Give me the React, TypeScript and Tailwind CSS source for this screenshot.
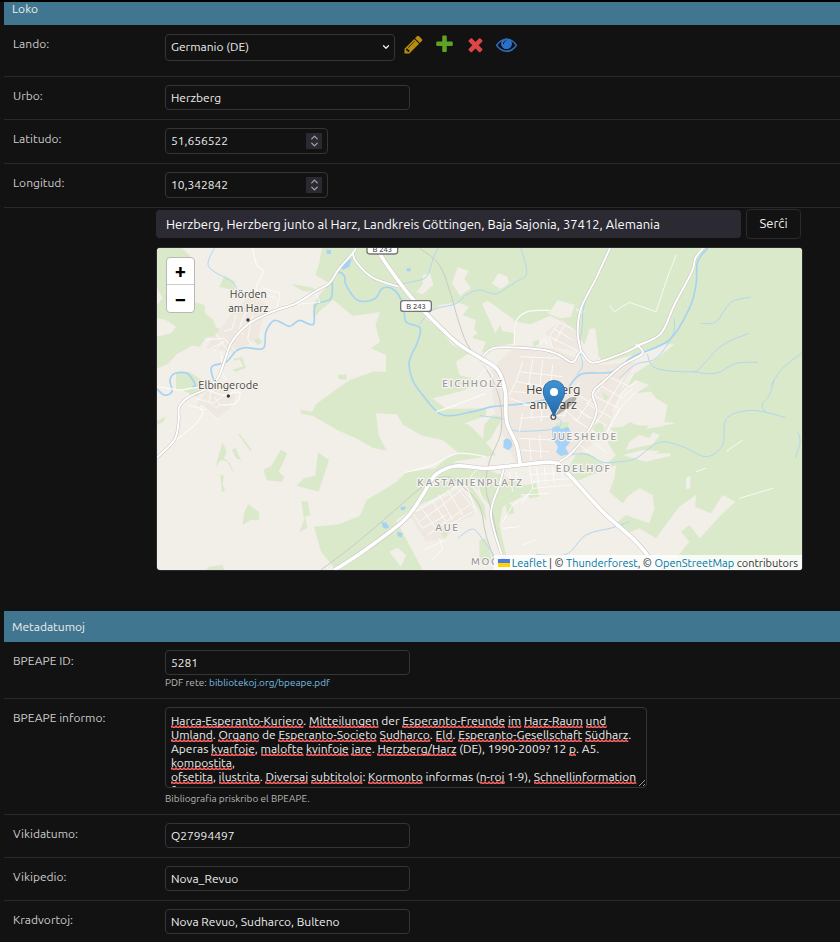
import { useMemo, useState } from 'react';
import type { ReactNode } from 'react';
import { ChevronDown, ChevronUp } from 'lucide-react';

type Point = [number, number];

const FIELD =
  'h-[25px] w-full rounded border border-[#353535] bg-[#121212] px-[5px] text-xs text-[#eeeeee] outline-none focus:border-[#666666]';

/* ---------- map data, in map units ---------- */

const FORESTS = [
  '3,129 78,129 100,150 112,200 100,240 110,290 145,300 148,325 172,345 180,368 210,376 195,392 150,398 132,425 108,422 62,448 34,478 3,490 3,395 45,385 60,365 30,345 3,340 3,300 20,280 3,250',
  '205,212 238,230 236,256 190,246',
  '405,236 470,248 490,262 440,258',
  '60,505 100,500 145,530 150,552 120,575 90,560 60,552',
  '232,462 258,455 270,488 240,500 228,494 262,484 250,462 236,468',
  '288,400 302,392 320,412 305,420',
  '545,510 572,508 572,525 548,522',
  '498,129 1938,129 1938,1095 540,1095 495,1040 474,965 548,958 612,932 632,885 720,832 752,800 838,790 870,760 905,742 860,705 800,692 742,660 722,628 660,625 668,690 692,738 650,728 600,700 545,676 470,632 436,626 432,614 468,620 480,598 545,550 582,525 650,500 690,500 690,450 645,430 672,410 658,360 672,322 590,332 532,285 500,310 478,334 470,300 492,268 522,236 478,210 490,175',
  '3,648 30,634 22,652 3,660',
  '200,712 212,740 204,760 222,775 235,808 214,770 196,765 180,784 188,750',
  '246,686 252,688 288,736 282,738',
  '228,734 240,728 246,746 256,766 240,760',
  '192,808 204,812 200,836 207,856 198,862',
  '374,734 394,745 368,800 384,815 378,830 332,826 322,794 346,782',
  '486,742 519,766 488,860 422,842 444,820 478,812',
  '276,898 308,920 310,946 284,944 260,960 264,925',
  '436,888 456,890 462,930 446,936 455,966 430,984 444,944',
  '160,1085 200,1080 205,1095 150,1095',
];

const FIELDS = [
  '800,210 822,205 832,240 800,268 780,262 800,240',
  '905,186 938,198 925,222 945,250 912,272 888,235',
  '850,300 905,292 940,305 920,330 960,345 950,400 990,410 972,455 930,440 890,420 850,375 805,335',
  '916,380 950,368 965,385 935,402',
  '560,90 575,90 575,100 560,100',
  '1008,236 1026,205 1052,214 1060,235 1034,252',
  '978,296 996,288 1075,345 1078,385 1040,378 1032,360 1018,385',
  '1182,318 1205,286 1256,300 1244,336 1212,340 1175,325',
  '1258,310 1290,318 1270,330',
  '900,470 930,450 990,440 1010,425 1075,415 1080,350 1124,358 1182,332 1220,350 1262,380 1290,430 1278,445 1300,372 1318,370 1328,455 1345,472 1440,448 1515,418 1555,418 1490,470 1430,510 1395,560 1440,525 1480,540 1440,565 1485,560 1500,580 1535,600 1525,650 1560,655 1470,672 1490,650 1440,640 1400,665 1360,668 1385,690 1355,712 1380,752 1345,780 1300,745 1265,740 1230,800 1320,860 1340,900 1350,1095 1060,1095 1010,980 1000,900 960,850 910,830 880,860 790,900 720,945 800,1095 1200,1095 1130,850 1010,800 890,770 1020,750 980,700 940,660 925,655 990,632 990,610 870,612 830,580 910,560 985,530 910,510',
  '1400,750 1460,735 1510,738 1498,746 1540,745 1545,752 1470,770',
  '1430,600 1510,595 1530,620 1520,665 1440,660 1400,640',
  '1420,710 1450,690 1480,700 1490,682 1512,690 1490,718 1410,735',
  '1040,905 1108,870 1210,850 1380,780 1375,820 1360,860 1400,895 1420,870 1450,850 1490,870 1495,910 1480,955 1435,940 1410,930 1380,955 1415,985 1450,970 1500,1000 1570,905 1620,870 1618,905 1665,925 1700,870 1738,890 1690,935 1632,1000 1600,960 1575,980 1600,1010 1560,1060 1545,1060 1500,1095 1060,1095 1030,960',
  '1590,820 1604,812 1602,850 1590,852',
  '700,1040 725,1028 750,1050 735,1085',
];

const BUILT_UP = [
  '1080,420 1190,430 1260,460 1340,480 1440,470 1400,540 1350,690 1260,750 1170,770 1080,780 1020,640 1000,500',
  '1220,345 1268,385 1280,440 1190,425 1170,380',
  '880,870 910,845 955,900 955,930 905,950 870,1000 810,1010 760,930',
  '225,330 290,260 330,300 305,400 240,440 150,430 170,400',
  '120,600 160,550 240,560 230,600 185,640 140,610',
];

const PARKS = [
  '985,660 1010,630 1040,635 1005,700 980,720',
  '1310,660 1340,650 1345,690 1320,700',
  '1200,655 1240,650 1235,670 1200,672',
  '1110,840 1140,835 1150,875 1120,880',
  '1340,560 1360,575 1345,590',
  '840,955 850,950 876,985 865,1000',
  '925,830 950,850 985,900 992,950 960,900',
  '1050,895 1070,900 1075,925 1052,930',
  '970,1005 990,1000 1010,1070 970,1070',
  '1130,410 1148,404 1150,418 1132,425',
];

const LAKES = [
  '1188,668 1206,662 1216,672 1236,665 1250,690 1240,715 1228,728 1238,745 1216,754 1200,742 1206,725 1190,700',
  '1043,706 1052,700 1065,705 1070,722 1058,736 1042,728',
  '676,952 690,952 700,966 690,972 680,966',
  '734,905 750,905 746,915 734,915',
  '512,134 526,136 524,148 512,146',
  '552,180 588,160 580,185 560,195',
  '724,980 740,984 738,998 724,992',
  '752,190 765,190 762,200 752,198',
];

const RIVERS: Point[][] = [
  [[3, 552], [25, 570], [48, 560], [42, 525], [58, 505], [95, 506], [118, 540], [108, 545]],
  [[180, 545], [166, 500], [172, 482], [212, 470], [240, 438], [270, 428], [322, 430], [330, 380], [356, 346], [400, 364], [430, 346], [472, 358], [478, 300], [525, 280], [530, 220], [550, 202], [566, 215], [570, 240], [605, 286], [655, 282], [680, 250], [715, 255], [742, 300], [750, 350], [792, 368], [785, 410], [760, 470], [770, 525], [800, 570], [860, 630], [950, 620], [1010, 605], [1110, 595], [1180, 580], [1230, 555], [1275, 508], [1370, 500], [1430, 455], [1540, 405], [1600, 310], [1620, 240], [1625, 170], [1655, 129]],
  [[175, 129], [158, 185], [230, 232], [245, 265]],
  [[845, 129], [830, 165], [812, 215], [770, 230], [718, 240]],
  [[790, 358], [830, 315], [900, 296], [930, 270], [972, 255], [1020, 266], [1080, 230], [1112, 205], [1095, 129]],
  [[1360, 129], [1320, 220], [1285, 300], [1278, 370], [1270, 430], [1280, 480], [1262, 510]],
  [[972, 632], [1050, 645], [1070, 675], [1130, 678], [1200, 670], [1215, 650], [1190, 630]],
  [[1210, 750], [1290, 748], [1340, 772], [1390, 770], [1440, 760], [1510, 712], [1580, 725], [1650, 755], [1700, 720], [1712, 640], [1790, 616], [1890, 638]],
  [[1855, 525], [1840, 570], [1818, 600], [1832, 625]],
  [[1634, 355], [1680, 350], [1725, 292], [1785, 276]],
  [[1474, 448], [1500, 490], [1610, 500], [1640, 480], [1700, 420], [1778, 385]],
  [[1610, 500], [1680, 505], [1740, 475], [1805, 472]],
  [[1938, 444], [1880, 490], [1845, 540]],
  [[1925, 680], [1932, 710], [1918, 760]],
  [[1140, 1048], [1230, 1048], [1290, 990], [1370, 968], [1420, 950]],
  [[906, 1000], [950, 972], [985, 1010], [1020, 1060]],
  [[1390, 520], [1440, 478], [1500, 460], [1550, 390], [1555, 340]],
];

const RAILWAYS: Point[][] = [
  [[790, 129], [850, 180], [885, 270], [905, 340], [935, 420], [990, 490], [1030, 580], [1035, 680], [1000, 770], [990, 850], [1010, 930], [1045, 1095]],
  [[495, 1095], [600, 1015], [700, 930], [800, 845], [870, 815], [920, 845], [970, 900], [990, 990], [1025, 1095]],
];

const LANES: Point[][] = [
  [[290, 129], [302, 180], [322, 200], [300, 250], [320, 280]],
  [[3, 545], [70, 555], [130, 548], [200, 570], [250, 562], [238, 595], [190, 600]],
  [[60, 705], [110, 665], [138, 630], [135, 600]],
  [[748, 802], [830, 780], [905, 745], [990, 755]],
  [[1075, 420], [1080, 350], [1115, 320], [1180, 316]],
  [[840, 620], [900, 600], [990, 565]],
];

const STREETS = [
  'M318 248L372 264 362 312M318 265L362 280M290 330L275 400 285 418M270 320L250 370 262 390M240 330L228 372 205 378M148 405L205 400 240 440M170 440L205 410 165 430M180 385L220 445M478 262L492 292 390 300M195 440L200 505 212 525',
  'M120 580L170 595 200 575 240 555M138 600L165 625 190 648M165 595L180 610 192 600 175 575M95 600L150 615M170 530L160 590',
  'M1090 455L1210 460M1100 470L1080 530 1060 570M1130 462L1115 560M1160 465L1150 560M1190 480L1180 570M1090 500L1220 515M1080 530L1200 550M1070 560L1230 570M1100 600L1180 600M1090 640L1230 630M1100 625L1090 680M1130 600L1125 640M1160 590L1155 650M1060 580L1150 610',
  'M1210 352L1255 375M1192 370L1250 405M1180 395L1270 440M1210 352L1180 395 1190 430M1225 362L1195 412M1150 420L1165 400 1175 418M975 470L1010 510 1000 540M1000 480L965 520',
  'M1350 510L1420 545 1440 530M1330 540L1400 580 1430 550M1310 570L1390 610 1350 690M1290 595L1370 640M1270 620L1350 660M1250 640L1330 690M1370 500L1300 590 1260 650M1400 520L1330 640 1290 690M1430 510L1370 620M1440 560L1400 600 1340 700M1250 560L1330 610M1235 585L1300 640M1220 610L1280 660M1270 530L1220 640',
  'M1090 700L1190 705M1090 735L1180 740M1120 700L1125 770M1150 690L1155 760M1270 720L1310 750M1280 690L1350 740M1300 670L1350 710',
  'M1120 785L1130 850 1095 900M1140 785L1150 845M1165 785L1170 840M1190 785L1195 835M1215 785L1220 825M1120 810L1240 800M1130 830L1250 820M1130 850L1250 840M1095 870L1180 865M1060 800L1070 860M1080 800L1085 840',
  'M780 920L905 840M790 950L860 900 920 850M800 970L870 930M815 990L940 900M850 870L890 945M875 855L920 930M770 925L800 970M800 915L840 970M830 890L870 950M900 845L955 910M935 850L960 920M880 960L950 920M850 1000L860 1030 830 1065M800 1035L870 1005M940 820L965 790M975 870L955 820M1040 950L1070 900 1110 875',
  'M1620 800L1650 790M1750 880L1850 850M1710 740L1760 705M1040 970L1090 965M1100 1020L1140 1005M1360 300L1375 320 1420 292 1500 320 1530 230 1560 150',
];

const MINOR_ROADS: Point[][] = [
  [[3, 758], [55, 705], [68, 650], [70, 605], [100, 575], [150, 552], [185, 520], [205, 470], [228, 410], [280, 355], [350, 320], [420, 295], [480, 258], [520, 235], [550, 190], [590, 145], [600, 129]],
  [[590, 140], [600, 170], [650, 218], [728, 245]],
  [[972, 465], [1000, 435], [1040, 427], [1160, 434], [1210, 450], [1250, 472], [1275, 440], [1310, 473], [1400, 445], [1450, 420], [1515, 385], [1555, 300], [1608, 200], [1618, 160], [1642, 129]],
  [[1275, 440], [1265, 380], [1275, 310], [1320, 220], [1362, 129]],
  [[1440, 418], [1460, 445], [1400, 480], [1345, 528], [1310, 565], [1322, 620], [1290, 690], [1240, 750], [1200, 775]],
  [[1045, 785], [1030, 840], [1005, 930], [1040, 1060], [1045, 1095]],
];

const MAJOR_ROADS: Point[][] = [
  [[660, 129], [700, 190], [760, 270], [830, 345], [905, 415], [972, 458], [1025, 495], [1048, 560], [1052, 650], [1082, 720], [1092, 775]],
  [[535, 1095], [620, 1040], [745, 945], [800, 870], [838, 810], [900, 783], [990, 790], [1090, 780], [1190, 772], [1230, 800], [1340, 920], [1440, 1010], [1510, 1095]],
];

// Round off a list of points into a flowing line
function flowLine(points: Point[]) {
  let d = `M${points[0][0]} ${points[0][1]}`;
  for (let i = 0; i < points.length - 1; i++) {
    const before = points[i - 1] ?? points[i];
    const from = points[i];
    const to = points[i + 1];
    const after = points[i + 2] ?? to;
    d += `C${from[0] + (to[0] - before[0]) / 6} ${from[1] + (to[1] - before[1]) / 6} ${to[0] - (after[0] - from[0]) / 6} ${to[1] - (after[1] - from[1]) / 6} ${to[0]} ${to[1]}`;
  }
  return d;
}

function Lines({ lines, className }: { lines: Point[][]; className: string }) {
  return (
    <g className={className}>
      {lines.map((line, i) => (
        <path key={i} d={flowLine(line)} />
      ))}
    </g>
  );
}

function Areas({ areas, className }: { areas: string[]; className: string }) {
  return (
    <g className={className}>
      {areas.map((points, i) => (
        <polygon key={i} points={points} />
      ))}
    </g>
  );
}

function MapDrawing() {
  return (
    <svg
      viewBox="3 129 1935 966"
      preserveAspectRatio="xMidYMid slice"
      className="block h-full w-full"
      role="img"
      aria-label="Mapo de Herzberg am Harz"
    >
      <defs>
        <linearGradient id="pin" x1="0" y1="0" x2="0" y2="1">
          <stop offset="0" stopColor="#3f94d3" />
          <stop offset="1" stopColor="#2268ad" />
        </linearGradient>
      </defs>
      <rect x="3" y="129" width="1935" height="966" className="fill-[#f2eee8]" />
      <Areas areas={FORESTS} className="fill-[#dbe9cb]" />
      <Areas areas={FIELDS} className="fill-[#f2eee8]" />
      <Areas areas={BUILT_UP} className="fill-[#eee8e1]" />
      <Areas areas={PARKS} className="fill-[#dbe9cb]" />
      <Areas areas={LAKES} className="fill-[#a6d3f5]" />
      <Lines lines={RIVERS.slice(0, 2)} className="fill-none stroke-[#a6d3f2] stroke-[5px]" />
      <Lines lines={RIVERS.slice(2)} className="fill-none stroke-[#b0d8ee] stroke-[3px]" />
      <Lines lines={RAILWAYS} className="fill-none stroke-[#cbc9c7] stroke-[3px]" />
      <g className="fill-none stroke-white stroke-[3px] opacity-80 [stroke-linejoin:round]">
        {STREETS.map((d, i) => (
          <path key={i} d={d} />
        ))}
      </g>
      <Lines lines={LANES} className="fill-none stroke-[#fbfaf6] stroke-[4px]" />
      <Lines lines={MINOR_ROADS} className="fill-none stroke-[#c6c4c0] stroke-[9px]" />
      <Lines lines={MINOR_ROADS} className="fill-none stroke-white stroke-[6px]" />
      <Lines lines={MAJOR_ROADS} className="fill-none stroke-[#c6c4c0] stroke-[14px]" />
      <Lines lines={MAJOR_ROADS} className="fill-none stroke-white stroke-[11px]" />

      {/* Road shields */}
      <g className="fill-white stroke-[#777777] stroke-[4px]">
        <rect x="633" y="115" width="92" height="32" rx="8" />
        <rect x="734" y="287" width="92" height="32" rx="8" />
      </g>
      <g className="fill-[#555555] text-[23px] font-medium" textAnchor="middle">
        <text x="679" y="140">B 243</text>
        <text x="780" y="311">B 243</text>
      </g>

      {/* Place names */}
      <g
        className="fill-[#444444] stroke-[#f6f3ee] stroke-[6px] text-[33px] [paint-order:stroke] [stroke-linejoin:round]"
        textAnchor="middle"
      >
        <text x="277" y="280">Hörden</text>
        <text x="277" y="322">am Harz</text>
        <text x="217" y="551">Elbingerode</text>
        <text x="1192" y="568" className="text-[39px]">Herzberg</text>
        <text x="1192" y="613" className="text-[39px]">am Harz</text>
      </g>
      <circle cx="276" cy="345" r="5" className="fill-[#333333]" />
      <circle cx="217" cy="573" r="5" className="fill-[#333333]" />
      <circle cx="1192" cy="636" r="7" className="fill-white stroke-[#555555] stroke-[4px]" />
      <g className="fill-[#98989c] stroke-[#f8f6f2] stroke-[7px] text-[30px] font-medium tracking-[5px] [paint-order:stroke] [stroke-linejoin:round]">
        <text x="859" y="547">EICHHOLZ</text>
        <text x="784" y="842">KASTANIENPLATZ</text>
        <text x="838" y="979">AUE</text>
        <text x="945" y="1081">MOOR</text>
        <text x="1186" y="705">JUESHEIDE</text>
        <text x="1199" y="802">EDELHOF</text>
      </g>

      {/* Marker */}
      <path d="M1196 634L1225 590Q1245 570 1262 578 1256 600 1196 634Z" className="fill-black/25" />
      <path
        d="M1194 527C1174 527 1162 542 1162 559C1162 580 1176 590 1194 634C1212 590 1226 580 1226 559C1226 542 1214 527 1194 527Z"
        fill="url(#pin)"
        className="stroke-[#2a6ca8] stroke-[3px]"
      />
      <circle cx="1194" cy="561" r="12" className="fill-white" />
    </svg>
  );
}

function LocationMap() {
  return (
    <div className="relative h-[324px] w-full max-w-[647px] overflow-hidden rounded-sm border border-[#2b2a33]">
      <MapDrawing />
      <div className="absolute top-[9px] left-[9px] flex flex-col overflow-hidden rounded border border-[#b8b8b4] bg-white font-bold text-black">
        <button type="button" title="Zoom in" className="h-[27px] w-[27px] border-b border-[#cccccc] text-xl leading-[26px]">
          +
        </button>
        <button type="button" title="Zoom out" className="h-[27px] w-[27px] text-xl leading-[26px]">
          −
        </button>
      </div>
      <div className="absolute right-0 bottom-0 flex h-[15px] items-center bg-white/80 px-1 pt-px text-[11px] leading-[14px] whitespace-pre text-[#333333]">
        <svg viewBox="0 0 12 8" className="mr-[2px] h-2 w-3" aria-hidden="true">
          <path fill="#4c7be1" d="M0 0h12v4H0z" />
          <path fill="#ffd500" d="M0 4h12v4H0z" />
        </svg>
        <a href="https://leafletjs.com" className="text-[#0078a8]">Leaflet</a>
        {' | © '}
        <a href="https://www.thunderforest.com" className="text-[#0078a8]">Thunderforest</a>
        {', © '}
        <a href="https://www.openstreetmap.org/copyright" className="text-[#0078a8]">OpenStreetMap</a>
        {' contributors'}
      </div>
    </div>
  );
}

/* ---------- form pieces ---------- */

function Row({ id, label, children }: { id: string; label: string; children: ReactNode }) {
  return (
    <div className="flex border-b border-[#292929] px-[9px] pt-2 pb-[9px]">
      <label htmlFor={id} className="w-[152px] shrink-0 text-xs leading-[22px] text-[#cccccc]">
        {label}
      </label>
      <div className="min-w-0 flex-1">{children}</div>
    </div>
  );
}

function Help({ children }: { children: ReactNode }) {
  return <p className="pt-[2px] text-[10px] leading-3 text-[#b8b8b8]">{children}</p>;
}

function TextRow({ id, label, value, help }: { id: string; label: string; value: string; help?: ReactNode }) {
  return (
    <Row id={id} label={label}>
      <input id={id} type="text" defaultValue={value} className={`${FIELD} block max-w-[245px]`} />
      {help && <Help>{help}</Help>}
    </Row>
  );
}

function NumberRow({ id, label, initial }: { id: string; label: string; initial: string }) {
  const [value, setValue] = useState(initial);

  const step = (amount: number) => {
    const next = parseFloat(value.replace(',', '.')) + amount;
    if (!Number.isNaN(next)) setValue(next.toFixed(6).replace('.', ','));
  };

  return (
    <Row id={id} label={label}>
      <div className="flex h-[26px] max-w-[163px] items-center rounded border border-[#353535] px-[5px]">
        <input
          id={id}
          type="text"
          inputMode="decimal"
          value={value}
          onChange={(e) => setValue(e.target.value)}
          className="min-w-0 flex-1 bg-transparent text-xs text-[#eeeeee] outline-none"
        />
        <div className="flex h-4 w-4 flex-col items-center justify-center bg-[#2b2a33] text-[#a0a0aa]">
          <button type="button" aria-label="Pli" onClick={() => step(1)} className="flex h-[7px] items-center">
            <ChevronUp size={11} strokeWidth={3} />
          </button>
          <button type="button" aria-label="Malpli" onClick={() => step(-1)} className="flex h-[7px] items-center">
            <ChevronDown size={11} strokeWidth={3} />
          </button>
        </div>
      </div>
    </Row>
  );
}

const ACTIONS = [
  {
    title: 'Ŝanĝi',
    color: 'text-[#b88c0c]',
    d: 'M491 1536l91-91-235-235-91 91v107h128v128h107zm523-928q0-22-22-22-10 0-17 7l-542 542q-7 7-7 17 0 22 22 22 10 0 17-7l542-542q7-7 7-17zm-54-192l416 416-832 832h-416v-416zm683 96q0 53-37 90l-166 166-416-416 166-165q36-38 90-38 53 0 91 38l235 234q37 39 37 91z',
  },
  {
    title: 'Aldoni',
    color: 'text-[#5fa225]',
    d: 'M1600 736v192q0 40-28 68t-68 28h-416v416q0 40-28 68t-68 28h-192q-40 0-68-28t-28-68v-416h-416q-40 0-68-28t-28-68v-192q0-40 28-68t68-28h416v-416q0-40 28-68t68-28h192q40 0 68 28t28 68v416h416q40 0 68 28t28 68z',
  },
  {
    title: 'Forigi',
    color: 'text-[#de4545]',
    d: 'M1490 1322q0 40-28 68l-136 136q-28 28-68 28t-68-28l-294-294-294 294q-28 28-68 28t-68-28l-136-136q-28-28-28-68t28-68l294-294-294-294q-28-28-28-68t28-68l136-136q28-28 68-28t68 28l294 294 294-294q28-28 68-28t68 28l136 136q28 28 28 68t-28 68l-294 294 294 294q28 28 28 68z',
  },
  {
    title: 'Vidi',
    color: 'text-[#2b70c5]',
    d: 'M1664 960q-152-236-381-353 61 104 61 225 0 185-131.5 316.5t-316.5 131.5-316.5-131.5-131.5-316.5q0-121 61-225-229 117-381 353 133 205 333.5 326.5t434.5 121.5 434.5-121.5 333.5-326.5zm-720-384q0-20-14-34t-34-14q-125 0-214.5 89.5t-89.5 214.5q0 20 14 34t34 14 34-14 14-34q0-86 61-147t147-61q20 0 34-14t14-34zm848 384q0 34-20 69-140 230-376.5 368.5t-499.5 138.5-499.5-139-376.5-368q-20-35-20-69t20-69q140-229 376.5-368t499.5-139 499.5 139 376.5 368q20 35 20 69z',
    // The iris is filled in
    iris: 'M896 384a448 448 0 1 0 .1 0zM944 528q0 34-48 48-186 20-208 256-10 48-48 48t-48-48q0-125 89-214t215-90z',
  },
];

function CountryRow() {
  return (
    <Row id="lando" label="Lando:">
      <div className="flex h-[34px] items-start">
        <div className="relative w-[230px]">
          <select
            id="lando"
            className="h-[27px] w-full appearance-none rounded border border-[#353535] bg-[#121212] px-[5px] text-xs text-[#eeeeee] outline-none"
          >
            <option>Germanio (DE)</option>
            <option>Francio (FR)</option>
            <option>Pollando (PL)</option>
          </select>
          <ChevronDown size={10} strokeWidth={3} className="pointer-events-none absolute top-[9px] right-1 text-[#eeeeee]" />
        </div>
        <div className="mt-px ml-2 flex gap-[10px]">
          {ACTIONS.map((action) => (
            <a key={action.title} href="#lando" title={action.title} className={action.color}>
              <svg viewBox="0 0 1792 1792" className="h-[21px] w-[21px] fill-current" aria-hidden="true">
                <path d={action.d} />
                {action.iris && <path d={action.iris} fillRule="evenodd" />}
              </svg>
            </a>
          ))}
        </div>
      </div>
    </Row>
  );
}

// One entry per drawn line; words wrapped in underscores are unknown to the spell checker
const INFO_LINES = [
  '_Harca-Esperanto-Kuriero_. _Mitteilungen_ der _Esperanto-Freunde_ _im_ _Harz-Raum_ _und_ ',
  '_Umland_. _Organo_ de _Esperanto-Societo_ _Sudharco_. _Eld_. _Esperanto-Gesellschaft_ _Südharz_. ',
  'Aperas _kvarfoje_, _malofte_ _kvinfoje_ _jare_. _Herzberg/Harz_ (DE), 1990-2009? 12 _p_. A5. ',
  '_kompostita_,\n',
  '_ofsetita_, _ilustrita_. _Diversaj_ _subtitoloj_: _Kormonto_ informas (_n-roj_ 1-9), _Schnellinformation_ ',
  'f',
];
const INFO = INFO_LINES.join('').replaceAll('_', '');

// Measure where each misspelled word stands on its line
function findMarks() {
  const pen = document.createElement('canvas').getContext('2d');
  if (!pen) return [];
  pen.font = '12px Ubuntu, "Noto Sans", sans-serif';

  return INFO_LINES.flatMap((line, row) => {
    let before = '';
    return line.split('_').flatMap((part, i) => {
      const x = pen.measureText(before).width;
      before += part;
      return i % 2 ? [{ row, x, width: pen.measureText(part).width }] : [];
    });
  });
}

function SpellCheckedArea({ id }: { id: string }) {
  const [text, setText] = useState(INFO);
  const marks = useMemo(findMarks, []);

  return (
    <div className="relative h-[81px] w-full max-w-[482px]">
      <textarea
        id={id}
        value={text}
        spellCheck={false}
        onChange={(e) => setText(e.target.value)}
        className="block h-full w-full resize overflow-hidden rounded border border-[#353535] bg-[#121212] px-[5px] py-[6px] text-xs leading-[14px] text-[#eeeeee] outline-none"
      />
      {text === INFO && (
        <svg className="pointer-events-none absolute inset-0 h-full w-full" aria-hidden="true">
          <defs>
            <pattern id="squiggle" width="4" height="3" patternUnits="userSpaceOnUse">
              <path d="M-1 3L1 1 3 3 5 1" className="fill-none stroke-[#ff6262] stroke-[1.5px]" />
            </pattern>
          </defs>
          {marks.map((mark, i) => (
            <g key={i} transform={`translate(${Math.round(6 + mark.x)} ${18 + mark.row * 14})`}>
              <rect width={mark.width} height="3" fill="url(#squiggle)" />
            </g>
          ))}
        </svg>
      )}
    </div>
  );
}

export default function App() {
  return (
    <form
      onSubmit={(e) => e.preventDefault()}
      className="border-t-2 border-black bg-[#121212] pl-1 font-['Ubuntu','Noto_Sans',sans-serif]"
    >
      <section>
        <h2 className="bg-[#417690] px-2 pb-[9px] text-xs leading-[14px] text-[#eeeeee]">Loko</h2>
        <CountryRow />
        <TextRow id="urbo" label="Urbo:" value="Herzberg" />
        <NumberRow id="latitudo" label="Latitudo:" initial="51,656522" />
        <NumberRow id="longitud" label="Longitud:" initial="10,342842" />

        <div className="pt-px pr-9 pl-[152px]">
          <div className="mb-2 flex max-w-[645px] items-center gap-[5px]">
            <input
              type="text"
              aria-label="Adreso"
              defaultValue="Herzberg, Herzberg junto al Harz, Landkreis Göttingen, Baja Sajonia, 37412, Alemania"
              className="h-7 min-w-0 flex-1 rounded-sm bg-[#2b2a33] px-[10px] text-[13px] text-[#fbfbfe] outline-none"
            />
            <button type="button" className="h-[30px] w-[55px] rounded border border-[#2b2a2c] text-[13px] text-[#eeeeee]">
              Serĉi
            </button>
          </div>
          <LocationMap />
        </div>
      </section>

      <section className="mt-10">
        <h2 className="bg-[#417690] p-2 text-xs leading-[15px] text-[#eeeeee]">Metadatumoj</h2>
        <TextRow
          id="bpeape-id"
          label="BPEAPE ID:"
          value="5281"
          help={
            <>
              PDF rete:{' '}
              <a href="https://bibliotekoj.org/bpeape.pdf" className="text-[#79bfe4]">
                bibliotekoj.org/bpeape.pdf
              </a>
            </>
          }
        />
        <Row id="bpeape-informo" label="BPEAPE informo:">
          <SpellCheckedArea id="bpeape-informo" />
          <div className="mt-[3px]">
            <Help>Bibliografia priskribo el BPEAPE.</Help>
          </div>
        </Row>
        <TextRow id="vikidatumo" label="Vikidatumo:" value="Q27994497" />
        <TextRow id="vikipedio" label="Vikipedio:" value="Nova_Revuo" />
        <TextRow id="kradvortoj" label="Kradvortoj:" value="Nova Revuo, Sudharco, Bulteno" />
      </section>
    </form>
  );
}
